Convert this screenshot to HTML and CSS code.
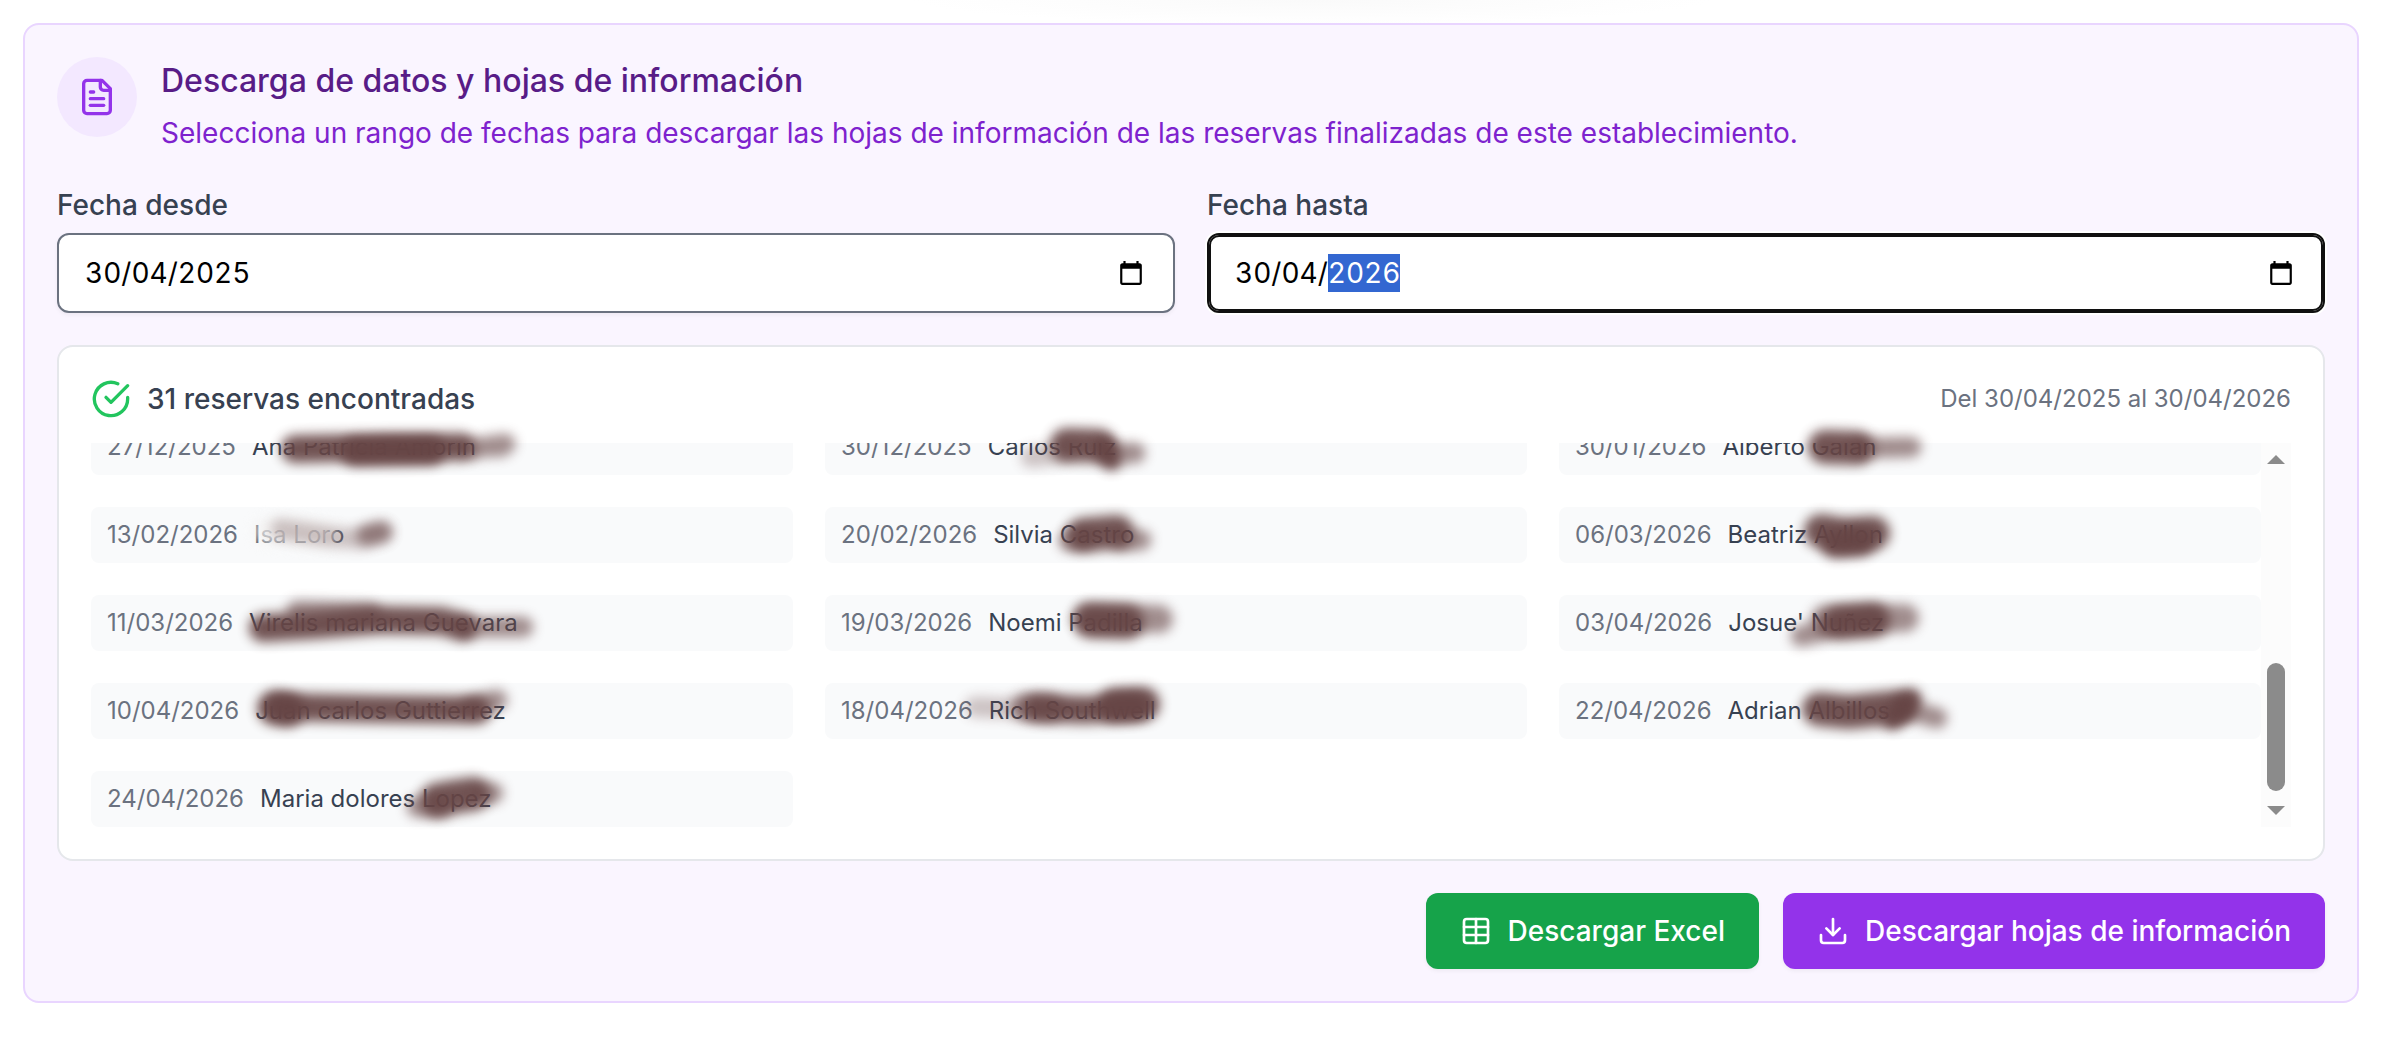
FILE: index.html
```html
<!DOCTYPE html>
<html lang="es">
<head>
    <meta charset="UTF-8">
    <meta name="viewport" content="width=device-width, initial-scale=1.0">
    <title>Descarga de datos</title>
    <link rel="stylesheet" href="styles.css">
</head>
<body>
    <section class="card">
        <div class="card-header">
            <div class="card-icon">
                <svg viewBox="0 0 24 24" width="40" height="40"><path d="M15 2H6a2 2 0 0 0-2 2v16a2 2 0 0 0 2 2h12a2 2 0 0 0 2-2V7Z"/><path d="M14 2v4a2 2 0 0 0 2 2h4"/><path d="M10 9H8"/><path d="M16 13H8"/><path d="M16 17H8"/></svg>
            </div>
            <div>
                <h3>Descarga de datos y hojas de información</h3>
                <p>Selecciona un rango de fechas para descargar las hojas de información de las reservas finalizadas de este establecimiento.</p>
            </div>
        </div>

        <!-- Rango de fechas -->
        <div class="dates">
            <div class="field">
                <label for="desde">Fecha desde</label>
                <div class="date-box">
                    <input type="text" id="desde" value="30/04/2025">
                    <button type="button" class="picker" aria-label="Abrir calendario">
                        <svg viewBox="0 0 24 24" width="26" height="26"><path d="M20 3h-1V1h-2v2H7V1H5v2H4c-1.1 0-2 .9-2 2v16c0 1.1.9 2 2 2h16c1.1 0 2-.9 2-2V5c0-1.1-.9-2-2-2zm0 18H4V8h16v13z"/></svg>
                    </button>
                </div>
            </div>
            <div class="field">
                <label for="hasta">Fecha hasta</label>
                <div class="date-box active">
                    <input type="text" id="hasta" value="30/04/2026">
                    <button type="button" class="picker" aria-label="Abrir calendario">
                        <svg viewBox="0 0 24 24" width="26" height="26"><path d="M20 3h-1V1h-2v2H7V1H5v2H4c-1.1 0-2 .9-2 2v16c0 1.1.9 2 2 2h16c1.1 0 2-.9 2-2V5c0-1.1-.9-2-2-2zm0 18H4V8h16v13z"/></svg>
                    </button>
                </div>
            </div>
        </div>

        <!-- Reservas encontradas -->
        <div class="results">
            <div class="results-header">
                <div class="results-title">
                    <svg viewBox="0 0 24 24" width="40" height="40"><path d="M22 11.08V12a10 10 0 1 1-5.93-9.14"/><path d="m9 11 3 3L22 4"/></svg>
                    <span>31 reservas encontradas</span>
                </div>
                <span class="range">Del 30/04/2025 al 30/04/2026</span>
            </div>
            <div class="scroller">
                <div class="list-wrap">
                    <ul class="list">
                        <li><span class="day">27/12/2025</span><span>Ana Patricia Amorin</span></li>
                        <li><span class="day">30/12/2025</span><span>Carlos Ruiz</span></li>
                        <li><span class="day">30/01/2026</span><span>Alberto Galan</span></li>
                        <li><span class="day">13/02/2026</span><span>Isa Loro</span></li>
                        <li><span class="day">20/02/2026</span><span>Silvia Castro</span></li>
                        <li><span class="day">06/03/2026</span><span>Beatriz Ayllon</span></li>
                        <li><span class="day">11/03/2026</span><span>Virelis mariana Guevara</span></li>
                        <li><span class="day">19/03/2026</span><span>Noemi Padilla</span></li>
                        <li><span class="day">03/04/2026</span><span>Josue' Nuñez</span></li>
                        <li><span class="day">10/04/2026</span><span>Juan carlos Guttierrez</span></li>
                        <li><span class="day">18/04/2026</span><span>Rich Southwell</span></li>
                        <li><span class="day">22/04/2026</span><span>Adrian Albillos</span></li>
                        <li><span class="day">24/04/2026</span><span>Maria dolores Lopez</span></li>
                    </ul>
                    <!-- Trazos sobre los apellidos, un svg por columna -->
                    <div class="marks">
                        <svg>
                            <path class="w24" d="M204 6L300 4L370 4"/>
                            <path class="w24" d="M264 9L340 8"/>
                            <path class="w16 mid" d="M380 6L414 1M408 4L414 1"/>
                            <path class="w24 pale" d="M176 88L234 92"/>
                            <path class="w16 faint" d="M190 86L240 94L270 96L292 89"/>
                            <path class="w16 mid" d="M276 92L290 89"/>
                            <path class="w24" d="M172 185L225 182L290 177L350 178L372 184"/>
                            <path class="w16 mid" d="M206 168L280 170M374 184L432 184"/>
                            <path class="w30" d="M183 265L196 267"/>
                            <path class="w24" d="M190 264L290 266L386 267"/>
                            <path class="w16 mid" d="M380 264L406 257"/>
                            <path class="w30" d="M346 357L362 354L382 351"/>
                            <path class="w16 mid" d="M326 364L350 364M394 350L402 350"/>
                        </svg>
                        <svg>
                            <path class="w30" d="M242 2L274 3"/>
                            <path class="w16" d="M280 6L286 17"/>
                            <path class="w16 mid" d="M286 10L310 10"/>
                            <path class="w16 faint" d="M206 14L240 10"/>
                            <path class="w30" d="M258 92L292 89"/>
                            <path class="w16 mid" d="M244 98L260 96M296 98L316 97"/>
                            <path class="w30" d="M266 178L302 179"/>
                            <path class="w24 mid" d="M262 174L334 176"/>
                            <path class="w16 faint" d="M150 264L200 266"/>
                            <path class="w24 mid" d="M200 264L224 265"/>
                            <path class="w24" d="M212 265L260 267L310 264"/>
                            <path class="w30" d="M290 262L318 261"/>
                        </svg>
                        <svg>
                            <path class="w30" d="M266 4L298 5"/>
                            <path class="w16 mid" d="M304 5L352 4"/>
                            <path class="w30" d="M262 88L284 92L314 90"/>
                            <path class="w24" d="M276 101L302 99"/>
                            <path class="w30" d="M280 180L314 177"/>
                            <path class="w24 mid" d="M266 176L346 175"/>
                            <path class="w16 mid" d="M242 193L264 188"/>
                            <path class="w30" d="M260 266L290 269L340 264"/>
                            <path class="w16" d="M334 276L352 256"/>
                            <path class="w16 mid" d="M346 266L378 275"/>
                        </svg>
                    </div>
                </div>
                <div class="bar">
                    <span class="arrow up"></span>
                    <span class="thumb"></span>
                    <span class="arrow down"></span>
                </div>
            </div>
        </div>

        <div class="actions">
            <button type="button" class="btn green">
                <svg viewBox="0 0 24 24" width="32" height="32"><path d="M12 3v18"/><rect width="18" height="18" x="3" y="3" rx="2"/><path d="M3 9h18"/><path d="M3 15h18"/></svg>
                Descargar Excel
            </button>
            <button type="button" class="btn purple">
                <svg viewBox="0 0 24 24" width="32" height="32"><path d="M21 15v4a2 2 0 0 1-2 2H5a2 2 0 0 1-2-2v-4"/><path d="m7 10 5 5 5-5"/><path d="M12 15V3"/></svg>
                Descargar hojas de información
            </button>
        </div>
    </section>

    <script>
        // Dejar el año seleccionado en la fecha final
        window.onload = function() {
            const hasta = document.getElementById('hasta');
            hasta.focus();
            hasta.setSelectionRange(6, 10);
        };
    </script>
</body>
</html>
```

FILE: styles.css
```css
* {
    box-sizing: border-box;
}
body {
    margin: 0;
    padding: 23px 27px 36px 23px;
    background: radial-gradient(ellipse 400px 24px at 55% 0, #fafafa, #fff) no-repeat;
    font-family: Inter, "Liberation Sans", sans-serif;
    font-size: 28px;
    line-height: 40px;
    color: #374151;
}
svg {
    display: block;
    flex-shrink: 0;
    fill: none;
    stroke: currentColor;
    stroke-width: 2;
    stroke-linecap: round;
    stroke-linejoin: round;
}
.card {
    padding: 32px;
    background-color: #faf5ff;
    border: 2px solid #e9d5ff;
    border-radius: 16px;
}
.card-header {
    display: flex;
    align-items: flex-start;
    gap: 24px;
    margin-bottom: 32px;
}
.card-icon {
    padding: 20px;
    border-radius: 50%;
    background-color: #f3e8ff;
    color: #9333ea;
}
.card-header h3 {
    margin: 0 0 8px;
    font-size: 32px;
    line-height: 48px;
    font-weight: 500;
    color: #581c87;
}
.card-header p {
    margin: 0;
    color: #7e22ce;
}
.dates {
    display: grid;
    grid-template-columns: 1fr 1fr;
    gap: 32px;
    margin-bottom: 32px;
}
.field label {
    display: block;
    margin-bottom: 8px;
    font-weight: 500;
}
.date-box {
    display: flex;
    align-items: center;
    height: 80px;
    padding: 0 29px 0 24px;
    background-color: #fff;
    border: 2px solid #6b7280;
    border-radius: 12px;
    box-shadow: 0 2px 4px rgba(0,0,0,0.05);
}
.date-box.active {
    border-color: #101010;
    box-shadow: inset 0 0 0 2px #101010, 0 0 0 2px #fff;
}
.date-box input {
    flex: 1;
    min-width: 0;
    padding: 0 2px;
    border: none;
    outline: none;
    background: none;
    font-family: inherit;
    font-size: 28px;
    line-height: 38px;
    font-variant-numeric: tabular-nums;
    color: #000;
}
.date-box input::selection {
    background-color: #3367d1;
    color: #fff;
}
.picker {
    padding: 0;
    border: none;
    background: none;
    color: #000;
    cursor: pointer;
}
.picker svg {
    fill: currentColor;
    stroke: none;
}
.results {
    padding: 32px;
    background-color: #fff;
    border: 2px solid #e5e7eb;
    border-radius: 16px;
}
.results-header {
    display: flex;
    justify-content: space-between;
    align-items: center;
    margin-bottom: 24px;
}
.results-title {
    display: flex;
    align-items: center;
    gap: 16px;
    font-weight: 500;
}
.results-title svg {
    color: #22c55e;
}
.range {
    font-size: 24px;
    color: #6b7280;
}
.scroller {
    display: flex;
    height: 384px;
}
.list-wrap {
    position: relative;
    flex: 1;
}
.list, .marks {
    display: grid;
    grid-template-columns: repeat(3, 1fr);
    gap: 32px;
    height: 100%;
}
.list {
    align-content: end;
    margin: 0;
    padding: 0;
    overflow: hidden;
    list-style: none;
}
.list li {
    display: flex;
    gap: 16px;
    padding: 12px 16px;
    background-color: #f9fafb;
    border-radius: 8px;
    font-size: 24px;
    line-height: 32px;
}
.day {
    color: #6b7280;
}
.marks {
    position: absolute;
    inset: 0;
    pointer-events: none;
}
.marks svg {
    width: 100%;
    height: 100%;
    overflow: visible;
    color: #664545;
}
.marks path {
    filter: blur(6px);
    opacity: 0.92;
}
.marks .w16 {
    stroke-width: 21px;
}
.marks .w24 {
    stroke-width: 28px;
}
.marks .w30 {
    stroke-width: 34px;
}
.marks .mid {
    opacity: 0.6;
}
.marks .faint {
    opacity: 0.3;
}
.marks .pale {
    stroke: #f4f3f2;
    opacity: 0.8;
}
.bar {
    display: flex;
    flex-direction: column;
    align-items: center;
    width: 30px;
    padding: 12px 0;
    background-color: #fcfcfc;
}
.arrow {
    border: 9px solid transparent;
}
.arrow.up {
    border-top: none;
    border-bottom-color: #8b8b8b;
}
.arrow.down {
    border-bottom: none;
    border-top-color: #8b8b8b;
}
.thumb {
    width: 18px;
    height: 128px;
    margin-top: auto;
    margin-bottom: 15px;
    border-radius: 9px;
    background-color: #8b8b8b;
}
.actions {
    display: flex;
    justify-content: flex-end;
    gap: 24px;
    margin-top: 32px;
}
.btn {
    display: flex;
    align-items: center;
    gap: 16px;
    padding: 18px 34px;
    border: none;
    border-radius: 12px;
    box-shadow: 0 2px 4px rgba(0,0,0,0.05);
    font-family: inherit;
    font-size: 28px;
    line-height: 40px;
    font-weight: 500;
    color: #fff;
    cursor: pointer;
}
.btn.green {
    background-color: #16a34a;
}
.btn.purple {
    background-color: #9333ea;
}
@media (max-width: 768px) {
    .dates {
        grid-template-columns: 1fr;
    }
    .actions {
        flex-direction: column;
    }
}
```
